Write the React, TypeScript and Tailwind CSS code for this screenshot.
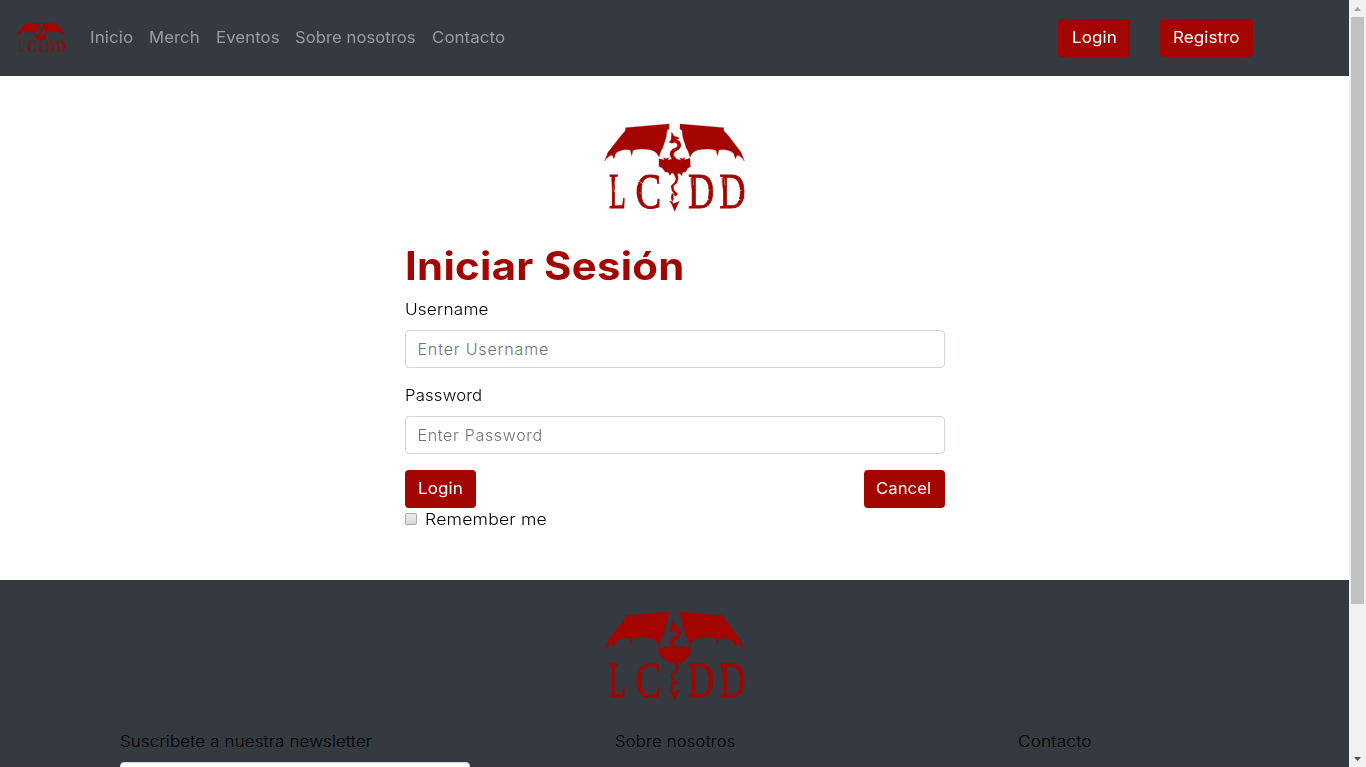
import React from "react";

function Logo({ className, id }: { className: string; id: string }) {
  return (
    <svg viewBox="0 0 450 300" preserveAspectRatio="none" className={className + " overflow-visible"} fill="#a30600" stroke="#a30600" aria-label="LCIDD">
      <mask id={id} maskUnits="userSpaceOnUse" x="0" y="0" width="450" height="310">
        <rect width="450" height="310" fill="#fff" stroke="none" />
        <g stroke="#000" strokeWidth="2" fill="none">
          <path d="M43 190l-2 17 2 15M118 190l11 8M114 222l9 4M155 264l6-7" />
          <path d="M278 180l3 22M312 190l7 10-2 9M318 242l12 5M323 218l14-3" />
          <path d="M372 180l3 22M406 190l7 10-2 9M412 242l12 5M417 218l14-3" />
        </g>
      </mask>
      <path d="M77 29 L207 18 L207 33 L201 37 L199 54 L196 66 L192 77 L188 91 L183 98 L177 117 Q170 99 151 95 Q119 90 99 97 L95 113 L91 96 Q66 91 47 106 L42 122 L37 112 Q25 112 14 129 L24 103 L63 53 L76 38 Z" />
      <path d="M371 29 L240 18 L240 33 L246 37 L248 54 L251 66 L255 77 L259 91 L264 98 L270 117 Q277 99 296 95 Q328 90 348 97 L353 113 L356 96 Q382 91 401 106 L406 122 L411 112 Q423 112 433 129 L423 103 L385 53 L371 38 Z" />
      <path d="M215 43 L222 54 L237 59 L235 64 L225 64 Q242 66 243 82 Q243 92 229 99 Q218 104 222 114 L231 124 L244 127 L239 119 L247 122 L255 119 L253 126 L270 121 L271 146 L263 151 L256 163 L249 161 L245 173 L239 166 L232 168 L235 181 L231 195 L220 204 L222 217 L233 227 L228 235 L219 229 L221 242 L216 251 L221 257 L238 250 L230 266 L224 280 L216 260 L209 249 L217 251 L213 239 L216 226 L225 231 L216 218 L213 204 L224 193 L228 182 L222 168 L216 164 L209 172 L205 163 L196 162 L187 150 L177 145 L177 122 L193 126 L191 119 L199 122 L207 119 L203 127 L216 123 Q207 111 211 101 Q214 94 227 89 Q236 84 231 77 Q226 70 216 76 L207 73 L213 66 Z" />
      <g mask={"url(#" + id + ")"} fontFamily="Liberation Serif, serif" fontSize="151" strokeWidth="2.5">
        <text transform="translate(27 271) scale(.55 1)">L</text>
        <text transform="translate(107 271) scale(.76 1)">C</text>
        <text transform="translate(264 271) scale(.72 1)">D</text>
        <text transform="translate(358 271) scale(.72 1)">D</text>
      </g>
      <path d="M34 180h8v38l-4-12zM113 200l-3 25 8 24 5-9-4-16zM273 180h6v36l-4-8zM329 196l8 22-2 26-8 12 3-30zM366 180h6v36l-4-8zM424 196l8 22-2 26-8 12 3-30z" />
    </svg>
  );
}

const button = "h-[38px] rounded bg-[#a30600] text-white text-[15.5px] leading-6 flex items-center justify-center whitespace-nowrap font-normal tracking-[0.05px]";
const wide = "inline-block origin-left whitespace-nowrap tracking-[0.15px]";

export default function App() {
  return (
    <div className="flex h-[767px] w-[1366px] overflow-hidden bg-white font-['Inter',sans-serif] text-[15.5px] font-light text-black">
      <div className="flex min-w-0 flex-1 flex-col overflow-hidden">
        <header className="flex h-[76px] shrink-0 items-center bg-[#343a40] pl-[15px] pr-[96px]">
          <Logo id="nav-logo" className="h-[34px] w-[52px] shrink-0" />
          <nav className="ml-[23px] flex flex-1 gap-4 whitespace-nowrap font-normal leading-6 tracking-[0.05px] text-[#9a9da0]">
            <a className="w-[43px] origin-left scale-x-[1.1]">Inicio</a>
            <a className="w-[51px] origin-left scale-x-[1.08]">Merch</a>
            <a className="w-[63px] origin-left scale-x-[1.085]">Eventos</a>
            <a className="w-[120.5px] origin-left scale-x-[1.073]">Sobre nosotros</a>
            <a className="w-[74px] origin-left scale-x-[1.09]">Contacto</a>
          </nav>
          <button className={button + " w-[72px]"}><span className="scale-x-[1.1]">Login</span></button>
          <button className={button + " ml-[30px] w-[93px]"}><span className="scale-x-[1.1]">Registro</span></button>
        </header>
        <main className="flex h-[504px] shrink-0 flex-col items-center pt-[42px]">
          <Logo id="main-logo" className="h-[100px] w-[150px] shrink-0" />
          <form className="mt-6 w-[540px]">
            <h1 className="mb-2 h-12 origin-left scale-x-[1.073] whitespace-nowrap text-[39px] font-bold leading-[48px] tracking-[0.3px] text-[#a30600]">Iniciar Sesión</h1>
            <label className="mb-4 block">
              <span className="mb-2 block h-6 leading-6"><span className={wide + " scale-x-[1.11]"}>Username</span></span>
              <input type="text" placeholder="Enter Username" className="block h-[38px] w-full rounded border border-[#ced4da] bg-white px-3 text-[16px] tracking-[0.85px] placeholder:text-[#6c757d] placeholder:opacity-100" />
            </label>
            <label className="mb-4 block">
              <span className="mb-2 block h-6 leading-6"><span className={wide + " scale-x-[1.08]"}>Password</span></span>
              <input type="password" placeholder="Enter Password" className="block h-[38px] w-full rounded border border-[#ced4da] bg-white px-3 text-[16px] tracking-[0.68px] placeholder:text-[#6c757d] placeholder:opacity-100" />
            </label>
            <div className="flex justify-between">
              <button type="button" className={button + " w-[71px]"}><span className="scale-x-[1.1]">Login</span></button>
              <button type="button" className={button + " w-[81px]"}><span className="scale-x-[1.075]">Cancel</span></button>
            </div>
            <label className="flex h-6 items-center">
              <input type="checkbox" className="mr-2 mb-0.5 h-3 w-3 appearance-none rounded-[2px] border border-[#a9a9a9] bg-linear-to-b from-[#eeeeee] to-[#dadada]" />
              <span className={wide + " scale-x-[1.14]"}>Remember me</span>
            </label>
          </form>
        </main>
        <footer className="flex flex-1 flex-col items-center bg-[#343a40] pt-[26px]">
          <Logo id="footer-logo" className="h-[101px] w-[150px] shrink-0" />
          <div className="mt-[23px] grid w-full grid-cols-[495px_403px_auto] pl-[120px] leading-6">
            <div>
              <p className="h-6"><span className={wide + " scale-x-[1.09]"}>Suscribete a nuestra newsletter</span></p>
              <input type="email" className="mt-2 h-[38px] w-[350px] rounded border border-[#ced4da] bg-white" />
            </div>
            <p><span className={wide + " scale-x-[1.08]"}>Sobre nosotros</span></p>
            <p><span className={wide + " scale-x-[1.11]"}>Contacto</span></p>
          </div>
        </footer>
      </div>
      <div className="flex w-[17px] shrink-0 flex-col items-center bg-[#f1f1f1]">
        <svg viewBox="0 0 17 17" className="h-[17px] w-[17px] shrink-0" fill="#a3a3a3"><path d="M5 11L8.500 7L12 11z" /></svg>
        <div className="h-[587px] w-[13px] bg-[#c1c1c1]" />
        <svg viewBox="0 0 17 17" className="mt-auto h-[17px] w-[17px] shrink-0" fill="#505050"><path d="M5 7h7L8.500 11z" /></svg>
      </div>
    </div>
  );
}
